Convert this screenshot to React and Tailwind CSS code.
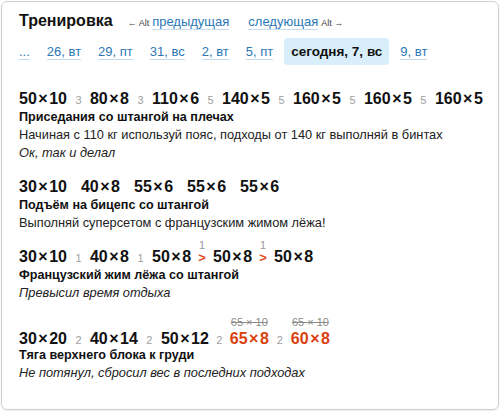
import React from "react";

const BLUE = "text-[#2b78b6]";

function Link({ children }) {
  return <span className={`${BLUE} border-b border-[#c6dbeb]`}>{children}</span>;
}

function Set({ children, red }) {
  const [a, b] = children.split("×");
  return (
    <span className={`text-[16px] font-bold leading-[19px] whitespace-nowrap ${red ? "text-[#d9400c]" : "text-[#111]"}`}>
      {a}<span className="mx-[1.5px]">×</span>{b}
    </span>
  );
}

function Num({ n, w = "w-[23px]" }) {
  return <span className={`${w} shrink-0 text-center text-[11px] text-[#a0a0a0]`}>{n}</span>;
}

function Gap() {
  return <span className="w-[14px] shrink-0" />;
}

function Arrow() {
  return (
    <span className="relative w-[22px] shrink-0 text-center text-[13px] font-bold text-[#e0481a]">
      <span className="absolute left-0 right-0 -top-[11px] text-[11px] font-normal text-[#999]">1</span>
      &gt;
    </span>
  );
}

function Struck({ top, children }) {
  return (
    <span className="relative">
      <span className="absolute -left-[4px] -right-[4px] -top-[11px] text-center text-[11px] font-normal leading-[12px] text-[#8a8a8a] line-through whitespace-nowrap">{top}</span>
      <Set red>{children}</Set>
    </span>
  );
}

function Block({ className = "", sets, name, lines }) {
  return (
    <div className={className}>
      <div className="flex items-baseline h-[19px]">{sets}</div>
      <div className="text-[12.6px] font-bold leading-[18px] text-[#111]">{name}</div>
      {lines.map((l, i) => (
        <div key={i} className={`text-[12.8px] leading-[18px] text-[#222] ${l.italic ? "italic" : ""}`}>{l.text}</div>
      ))}
    </div>
  );
}

export default function App() {
  return (
    <div className="p-[1px] font-['Liberation_Sans',Arial,sans-serif] bg-white">
      <div className="w-[498px] h-[409px] border border-[#cfcfcf] rounded-[6px] pl-[17px] pt-[8px] shadow-[0_1px_2px_rgba(0,0,0,0.08)]">
        <div className="flex items-baseline h-[22px]">
          <span className="text-[16px] font-bold leading-[22px] text-[#111]">Тренировка</span>
          <span className="ml-[15px] text-[9px] text-[#444]">← Alt</span>
          <span className="ml-[3px] text-[13px]"><Link>предыдущая</Link></span>
          <span className="ml-[19px] text-[13px]"><Link>следующая</Link></span>
          <span className="ml-[3px] text-[9px] text-[#444]">Alt →</span>
        </div>
        <div className="flex items-center gap-[5px] -ml-[6px] mt-[6px] text-[13px] leading-[17px]">
          {["...", "26, вт", "29, пт", "31, вс", "2, вт", "5, пт"].map((d) => (
            <span key={d} className="px-[6px] py-[5px]"><Link>{d}</Link></span>
          ))}
          <span className="px-[7px] py-[5px] rounded-[4px] bg-[#d8effb] text-[13.5px] font-bold text-[#111]">сегодня, 7, вс</span>
          <span className="px-[6px] py-[5px]"><Link>9, вт</Link></span>
        </div>

        <Block
          className="mt-[24px]"
          sets={<>
            <Set>50×10</Set><Num n="3" /><Set>80×8</Set><Num n="3" /><Set>110×6</Set><Num n="5" />
            <Set>140×5</Set><Num n="5" /><Set>160×5</Set><Num n="5" /><Set>160×5</Set><Num n="5" /><Set>160×5</Set>
          </>}
          name="Приседания со штангой на плечах"
          lines={[
            { text: "Начиная с 110 кг используй пояс, подходы от 140 кг выполняй в бинтах" },
            { text: "Ок, так и делал", italic: true },
          ]}
        />
        <Block
          className="mt-[15px]"
          sets={<>
            <Set>30×10</Set><Gap /><Set>40×8</Set><Gap /><Set>55×6</Set><Gap /><Set>55×6</Set><Gap /><Set>55×6</Set>
          </>}
          name="Подъём на бицепс со штангой"
          lines={[{ text: "Выполняй суперсетом с французским жимом лёжа!" }]}
        />
        <Block
          className="mt-[15px]"
          sets={<>
            <Set>30×10</Set><Num n="1" /><Set>40×8</Set><Num n="1" /><Set>50×8</Set><Arrow /><Set>50×8</Set><Arrow /><Set>50×8</Set>
          </>}
          name="Французский жим лёжа со штангой"
          lines={[{ text: "Превысил время отдыха", italic: true }]}
        />
        <Block
          className="mt-[25px]"
          sets={<>
            <Set>30×20</Set><Num n="2" /><Set>40×14</Set><Num n="2" /><Set>50×12</Set><Num n="2" w="w-[21px]" />
            <Struck top="65 × 10">65×8</Struck><Num n="2" w="w-[22px]" /><Struck top="65 × 10">60×8</Struck>
          </>}
          name="Тяга верхнего блока к груди"
          lines={[{ text: "Не потянул, сбросил вес в последних подходах", italic: true }]}
        />
      </div>
    </div>
  );
}
